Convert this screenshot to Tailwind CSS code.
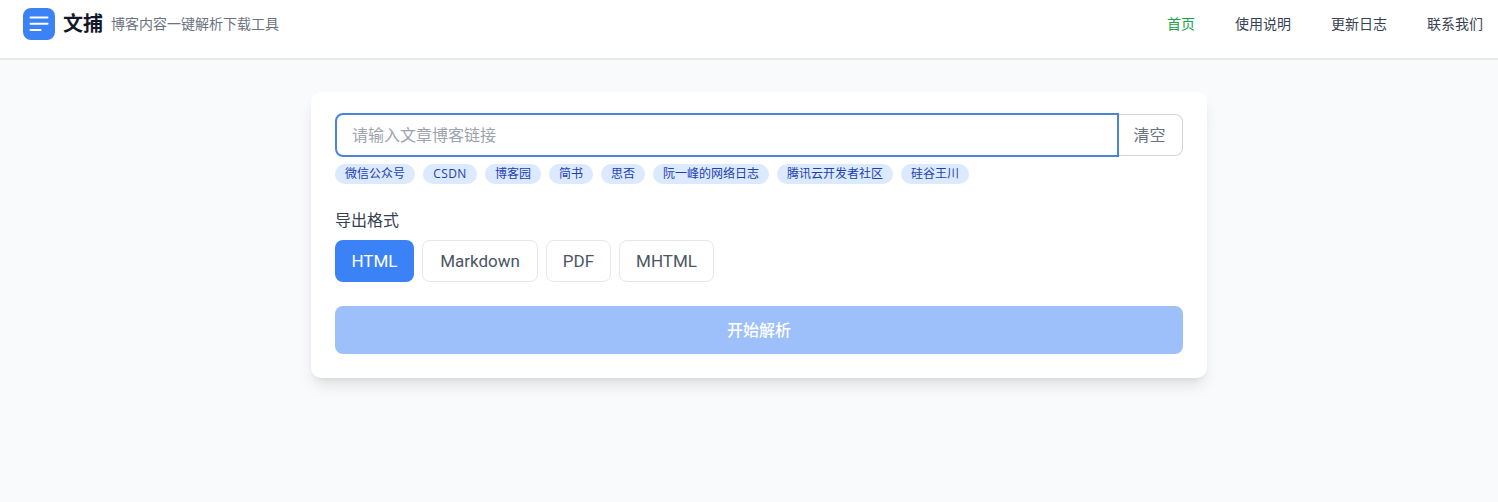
<!DOCTYPE html>
<html lang="zh-CN">
<head>
  <meta charset="UTF-8">
  <title>文捕</title>
  <script src="https://cdn.jsdelivr.net/npm/@tailwindcss/browser@4"></script>
</head>
<body class="min-h-[502px] overflow-hidden bg-[#f9fafb] text-gray-800 font-['Open_Sans','Noto_Sans_CJK_SC',sans-serif]">

  <header class="h-[60px] bg-white border-b-2 border-[#e8e9eb] flex justify-between pl-[23px] pr-[15px]">
    <div class="flex items-start pt-2">
      <div class="w-8 h-8 rounded-lg bg-[#3b82f6] flex items-center justify-center">
        <svg class="w-8 h-8" viewBox="0 0 32 32" fill="none" stroke="white" stroke-width="2" stroke-linecap="round">
          <path d="M7.5 9.5h17"/>
          <path d="M7.5 15.75h17"/>
          <path d="M7.5 22h10"/>
        </svg>
      </div>
      <span class="ml-2 h-8 leading-8 text-xl font-bold text-[#111827]">文捕</span>
      <span class="ml-2 h-8 leading-8 text-sm text-[#6b7280]">博客内容一键解析下载工具</span>
    </div>
    <nav class="flex items-start gap-10 pt-[14px] text-sm leading-5 text-[#374151]">
      <a class="text-[#16a34a]">首页</a>
      <a>使用说明</a>
      <a>更新日志</a>
      <a>联系我们</a>
    </nav>
  </header>

  <main class="w-[896px] ml-[311px] mt-[32px] bg-white rounded-[10px] shadow-lg p-6 pt-[21px]">
    <div class="flex items-center">
      <div class="w-[784px] h-11 border-2 border-[#4a82e0] rounded-l-lg flex items-center px-[15px] text-base text-[#9ca3af]">请输入文章博客链接</div>
      <button class="w-16 h-[42px] pr-[2px] border border-l-0 border-[#d1d5db] rounded-r-lg text-base text-[#6b7280]">清空</button>
    </div>

    <div class="flex gap-2 mt-[7px] text-xs leading-5 text-[#1e40af]">
      <span class="px-2.5 rounded-full bg-[#dbeafe]">微信公众号</span>
      <span class="w-[54px] text-center tracking-[0.4px] rounded-full bg-[#dbeafe]">CSDN</span>
      <span class="px-2.5 rounded-full bg-[#dbeafe]">博客园</span>
      <span class="px-2.5 rounded-full bg-[#dbeafe]">简书</span>
      <span class="px-2.5 rounded-full bg-[#dbeafe]">思否</span>
      <span class="px-2.5 rounded-full bg-[#dbeafe]">阮一峰的网络日志</span>
      <span class="px-2.5 rounded-full bg-[#dbeafe]">腾讯云开发者社区</span>
      <span class="px-2.5 rounded-full bg-[#dbeafe]">硅谷王川</span>
    </div>

    <div class="mt-6 text-base leading-6 text-[#374151]">导出格式</div>
    <div class="flex gap-2 mt-2 text-[17px] font-['Roboto',sans-serif]">
      <button class="h-[42px] w-[79px] pt-px rounded-lg bg-[#3b82f6] text-white">HTML</button>
      <button class="h-[42px] w-[116px] pt-px rounded-lg border border-[#e5e7eb] text-[#4b5563]">Markdown</button>
      <button class="h-[42px] w-[65px] pt-px rounded-lg border border-[#e5e7eb] text-[#4b5563]">PDF</button>
      <button class="h-[42px] w-[95px] pt-px rounded-lg border border-[#e5e7eb] text-[#4b5563]">MHTML</button>
    </div>

    <button class="w-full h-12 mt-6 rounded-lg bg-[#9dc0fa] text-white text-base font-medium">开始解析</button>
  </main>

</body>
</html>
